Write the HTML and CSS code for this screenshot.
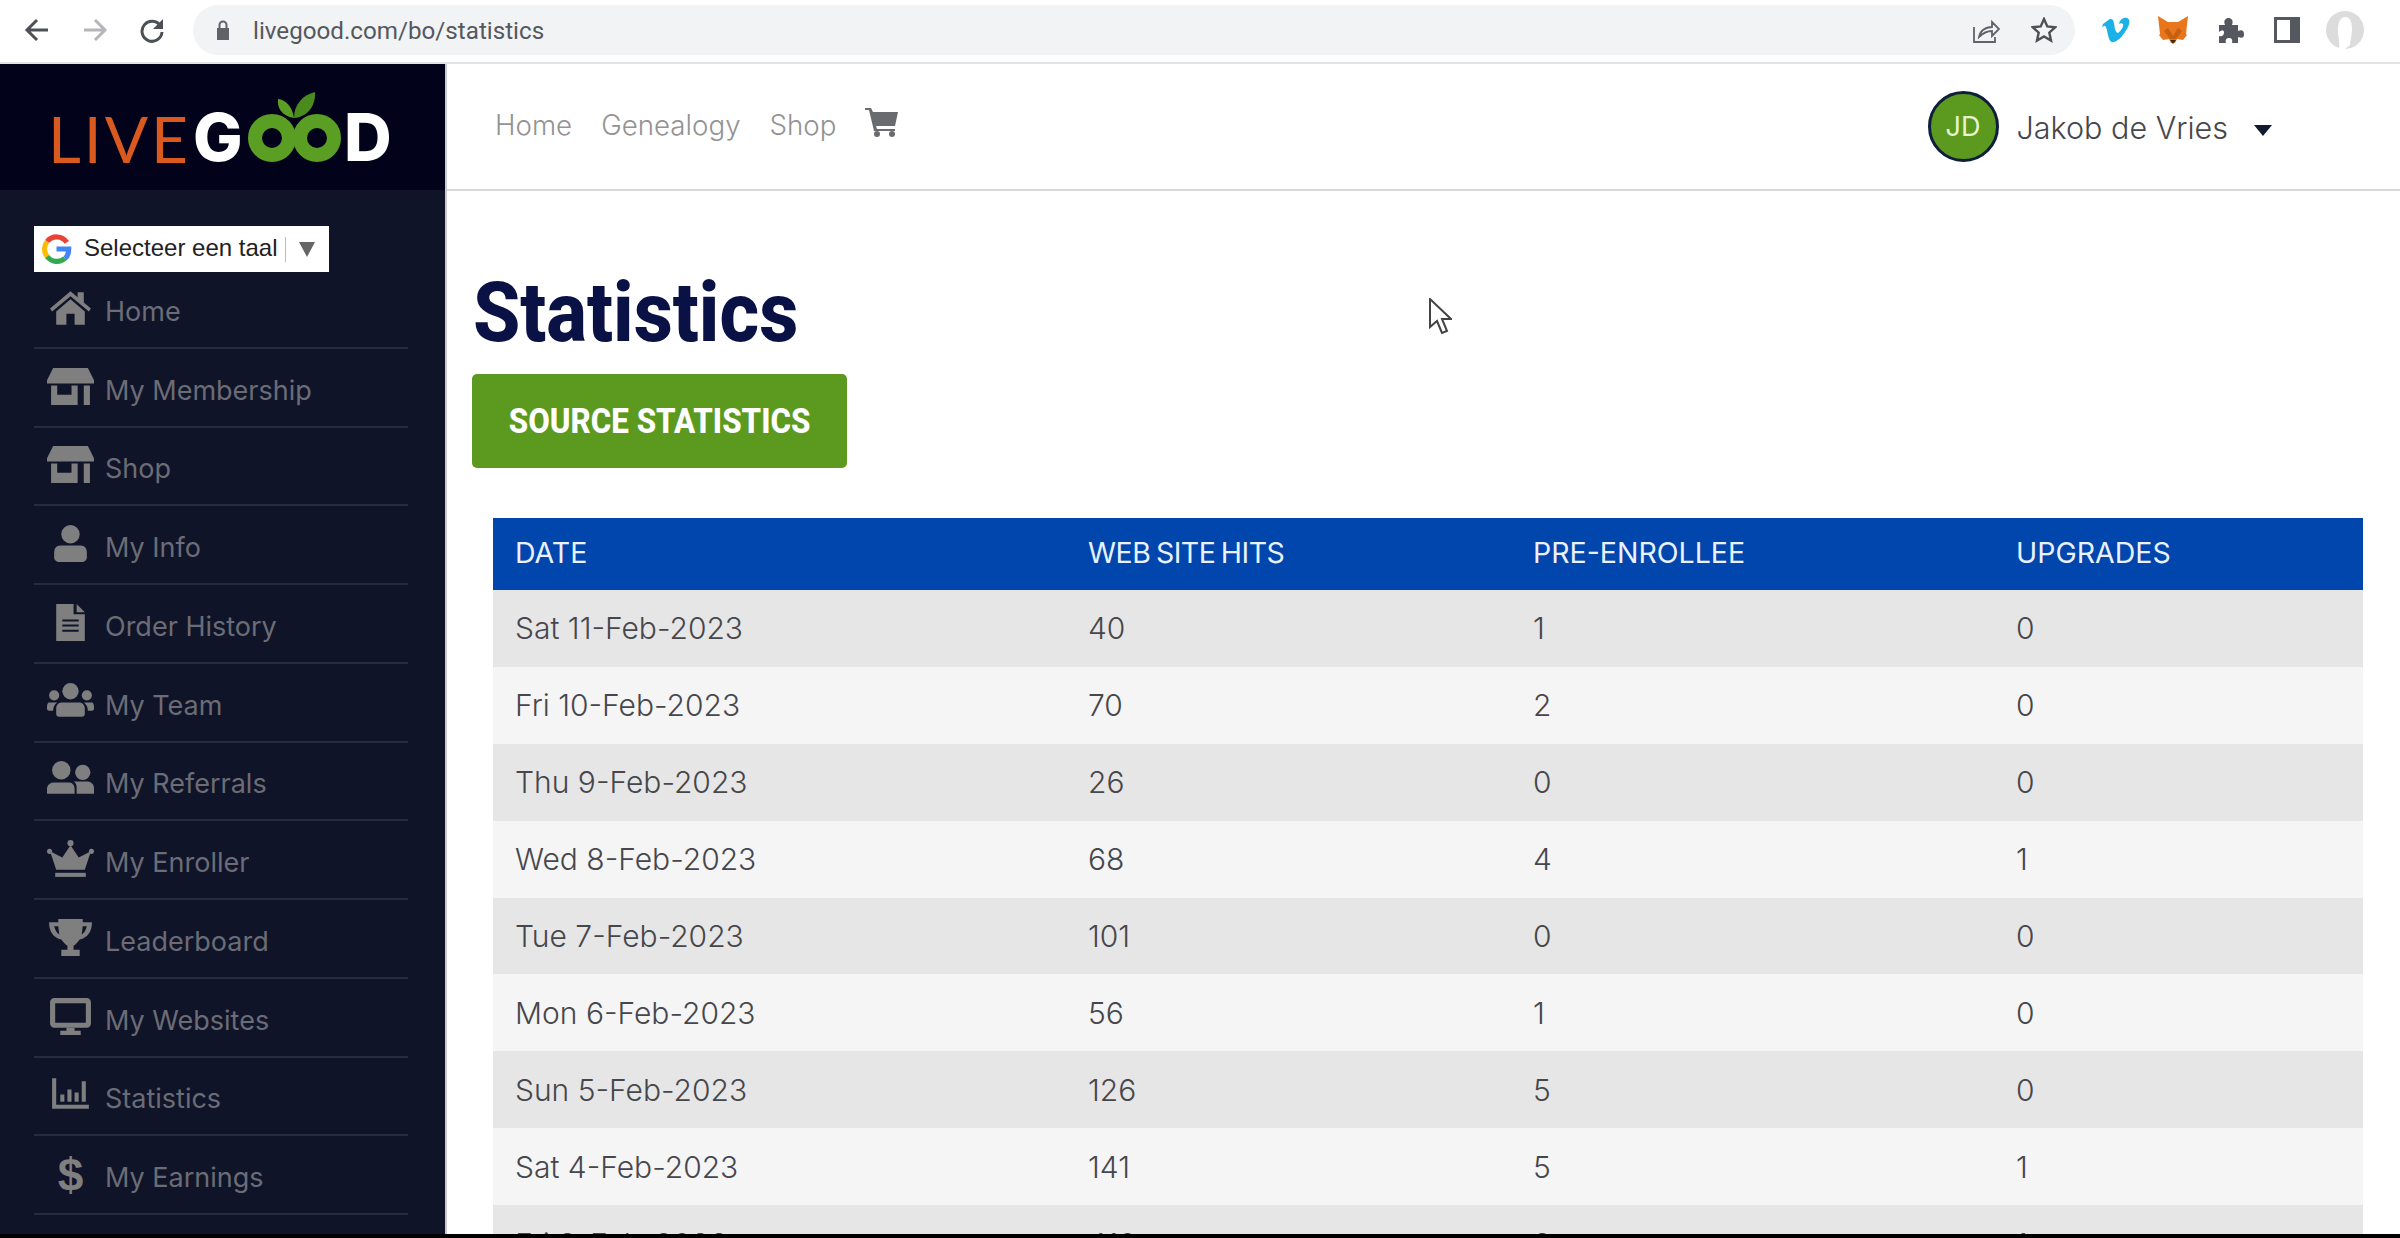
FILE: index.html
```html
<!DOCTYPE html>
<html lang="en">
<head>
  <meta charset="UTF-8" />
  <title>LiveGood - Statistics</title>
  <link rel="stylesheet" href="styles.css">
</head>
<body>

  <!-- Browser toolbar -->
  <div class="toolbar">
    <svg class="tb-nav" viewBox="0 0 26 26"><path d="M24 13H4M13 3 3 13l10 10" fill="none" stroke="#4d5156" stroke-width="3"/></svg>
    <svg class="tb-nav tb-forward" viewBox="0 0 26 26"><path d="M2 13h20M13 3l10 10-10 10" fill="none" stroke="#b4b6ba" stroke-width="3"/></svg>
    <svg class="tb-nav tb-reload" viewBox="0 0 26 26"><path d="M21.5 9A10 10 0 1 0 23 15" fill="none" stroke="#4d5156" stroke-width="3"/><path d="M24 2v10H14z" fill="#4d5156"/></svg>
    <div class="omnibox">
      <svg class="lock" viewBox="0 0 16 20"><path d="M2 8h12v12H2z" fill="#5f6368"/><path d="M4.500 8V5a3.500 3.500 0 0 1 7 0v3" fill="none" stroke="#5f6368" stroke-width="2"/></svg>
      <span class="url">livegood.com/bo/statistics</span>
      <svg class="share" viewBox="0 0 27 25"><path d="M1 9v15h21v-5M6 19c1-6 6-10 13-10V4l7 7-7 7v-5c-5 0-9 2-13 6z" fill="none" stroke="#5f6368" stroke-width="1.800"/></svg>
      <svg class="star" viewBox="0 0 26 26"><path d="m13 2 3.300 7.400 8 .8-6 5.400 1.700 7.900-7-4.100-7 4.100 1.700-7.900-6-5.400 8-.8z" fill="none" stroke="#4d5156" stroke-width="2.400"/></svg>
    </div>
    <div class="extensions">
      <svg class="ext-vimeo" viewBox="0 0 30 28"><path d="M2 8c4-3 6-5 8-5 3 0 3 5 4 10 1 3 2 4 3 4 3-2 6-7 5-9-1-1-3-1-4 0 1-5 5-7 8-6 3 1 3 5 1 9-3 6-9 14-14 15-4 1-5-3-6-7-1-5-2-10-4-9l-2 1z" fill="#1ab0e8"/></svg>
      <svg class="ext-fox" viewBox="0 0 30 28"><path d="M0 0l10 6h10l10-6-2 18 1 1-4 5-6-1-2 4h-4l-2-4-6 1-4-5 1-1z" fill="#e8761c"/><path d="M10 12l5 8 5-8 4 3-6 8h-6l-6-8z" fill="#c75f12"/><path d="M12 24h6l-3 4z" fill="#3a2a20"/></svg>
      <svg class="ext-puzzle" viewBox="0 0 27 27"><path d="M2 8h6c-2-5 1-7 3.500-7S17 3 15 8h6v6c5-2 6 1 6 3.500S26 22 21 20v6h-6c1-4-1-5-3-5s-4 1-3 5H2v-7c3 1 5-1 5-3.500S5 13 2 15z" fill="#55585e"/></svg>
      <svg class="ext-panel" viewBox="0 0 26 26"><path d="M0 0h26v26H0z" fill="#55585e"/><path d="M3 3h13v20H3z" fill="#fff"/></svg>
      <svg class="ext-profile" viewBox="0 0 38 38"><circle cx="19" cy="19" r="19" fill="#dcdcdc"/><path d="M13 38c1-8-1-12-1-20 0-9 4-12 7-12 4 0 7 3 7 12 0 7-2 12-2 16l-5 4z" fill="#fff"/></svg>
    </div>
  </div>

  <div class="app">

    <!-- Sidebar -->
    <aside class="sidebar">
      <div class="brand">
        <div class="logo">
          <span class="logo-live">LIVE</span>
          <span class="logo-good">G</span>
          <svg class="logo-mark" viewBox="0 0 93 70">
            <circle cx="24" cy="46" r="17" fill="none" stroke="#5a9e24" stroke-width="14"/>
            <circle cx="69" cy="46" r="17" fill="none" stroke="#5a9e24" stroke-width="14"/>
            <path d="M46 26C33 24 29 15 30 7c8 1 14 7 16 19z" fill="#5a9e24"/>
            <path d="M46 26C46 12 55 3 67 0c1 13-7 25-21 26z" fill="#4b8a1c"/>
          </svg>
          <span class="logo-good">D</span>
        </div>
      </div>

      <div class="translate">
        <svg class="g-logo" viewBox="0 0 32 32">
          <path d="M27 9A13 13 0 0 0 6 8" fill="none" stroke="#ea4335" stroke-width="5.500"/>
          <path d="M6 8a13 13 0 0 0 0 16" fill="none" stroke="#fbbc05" stroke-width="5.500"/>
          <path d="M6 24a13 13 0 0 0 19 2" fill="none" stroke="#34a853" stroke-width="5.500"/>
          <path d="M25 26c3-2 4-6 4-10H16" fill="none" stroke="#4285f4" stroke-width="5.500"/>
        </svg>
        <span class="translate-label">Selecteer een taal</span>
        <span class="translate-sep"></span>
        <span class="translate-arrow"></span>
      </div>

      <ul class="nav">
        <li class="nav-item">
          <svg class="nav-icon" viewBox="0 0 46 36"><path d="M23 2 3 19l2 3L23 7l18 15 2-3-7-6V3h-6v5z"/><path d="M23 10 9 22v13h10V24h8v11h10V22z"/></svg>
          <span>Home</span>
        </li>
        <li class="nav-item">
          <svg class="nav-icon" viewBox="0 0 46 36"><path d="M6 0h34l6 12v3H0v-3z"/><path d="M4 17h6v9h14v-9h6v19H4zM36 17h6v19h-6z"/></svg>
          <span>My Membership</span>
        </li>
        <li class="nav-item">
          <svg class="nav-icon" viewBox="0 0 46 36"><path d="M6 0h34l6 12v3H0v-3z"/><path d="M4 17h6v9h14v-9h6v19H4zM36 17h6v19h-6z"/></svg>
          <span>Shop</span>
        </li>
        <li class="nav-item">
          <svg class="nav-icon" viewBox="0 0 46 36"><circle cx="23" cy="9" r="9"/><path d="M13 20h20c4 0 6 3 6 7v5c0 2-2 4-4 4H11c-2 0-4-2-4-4v-5c0-4 2-7 6-7z"/></svg>
          <span>My Info</span>
        </li>
        <li class="nav-item">
          <svg class="nav-icon" viewBox="0 0 46 36"><path d="M9 0h17v10h11v26H9zM29 0l8 8h-8z"/><path d="M15 15h16v2H15zM15 20h16v2H15zM15 25h16v2H15z" fill="#0f1429"/></svg>
          <span>Order History</span>
        </li>
        <li class="nav-item">
          <svg class="nav-icon" viewBox="0 0 46 36"><circle cx="23" cy="8" r="8"/><circle cx="7" cy="12" r="5"/><circle cx="39" cy="12" r="5"/><path d="M14 19h18c3 0 5 3 5 6v5c0 2-1 3-3 3H12c-2 0-3-1-3-3v-5c0-3 2-6 5-6zM2 19h8c-3 2-4 5-4 8H2c-1 0-2-1-2-2v-2c0-2 1-4 2-4zM36 19h8c1 0 2 2 2 4v2c0 1-1 2-2 2h-4c0-3-1-6-4-8z"/></svg>
          <span>My Team</span>
        </li>
        <li class="nav-item">
          <svg class="nav-icon" viewBox="0 0 46 36"><circle cx="14" cy="9" r="9"/><circle cx="35" cy="11" r="7.500"/><path d="M6 21h16c3 0 5 3 5 6v5H0v-5c0-3 3-6 6-6zM29 32v-6c0-3-1-5-3-6h14c3 0 6 3 6 6v6z"/></svg>
          <span>My Referrals</span>
        </li>
        <li class="nav-item">
          <svg class="nav-icon" viewBox="0 0 46 36"><circle cx="23" cy="3" r="3"/><circle cx="2.500" cy="11" r="2.500"/><circle cx="43.500" cy="11" r="2.500"/><path d="M23 5l8 12 12-6-6 18H9L3 11l12 6z"/><path d="M8 32h30v4H8z"/></svg>
          <span>My Enroller</span>
        </li>
        <li class="nav-item">
          <svg class="nav-icon" viewBox="0 0 46 36"><path d="M11 0h24v3h9c0 9-4 15-12 17-2 3-4 5-6 6v4h6v6H14v-6h6v-4c-2-1-4-3-6-6C6 18 2 12 2 3h9zm0 7H7c1 4 3 7 5 8zm24 0-1 8c2-1 4-4 5-8z"/></svg>
          <span>Leaderboard</span>
        </li>
        <li class="nav-item">
          <svg class="nav-icon" viewBox="0 0 46 36"><path d="M7 0h32c2 0 4 2 4 4v21c0 2-2 4-4 4H7c-2 0-4-2-4-4V4c0-2 2-4 4-4zm1 5v19h30V5z"/><path d="M19 29h8v3h6v4H13v-4h6z"/></svg>
          <span>My Websites</span>
        </li>
        <li class="nav-item">
          <svg class="nav-icon" viewBox="0 0 46 36"><path d="M5 2h4v26h32v4H5z"/><path d="M13 18h4v7h-4zM20 13h4v12h-4zM27 16h4v9h-4zM34 5h4v20h-4z"/></svg>
          <span>Statistics</span>
        </li>
        <li class="nav-item">
          <span class="nav-glyph">$</span>
          <span>My Earnings</span>
        </li>
        <li class="nav-item">
          <svg class="nav-icon" viewBox="0 0 46 36"><path d="M11 0h24v3H11z"/></svg>
        </li>
      </ul>
    </aside>

    <!-- Main content -->
    <main class="main">
      <header class="topbar">
        <nav class="topnav">
          <a>Home</a>
          <a>Genealogy</a>
          <a>Shop</a>
          <svg class="cart" viewBox="0 0 33 29"><path d="M0 0h6l2 4h25l-3 14H11l1 3h18v2H9L4 2H0z" fill="#6a6b6e"/><circle cx="12" cy="26" r="3" fill="#6a6b6e"/><circle cx="27" cy="26" r="3" fill="#6a6b6e"/></svg>
        </nav>
        <div class="user">
          <div class="avatar">JD</div>
          <span class="user-name">Jakob de Vries</span>
          <span class="user-caret"></span>
        </div>
      </header>

      <div class="content">
        <h1 class="page-title">Statistics</h1>
        <a class="btn-source"><span>SOURCE STATISTICS</span></a>

        <table class="stats">
          <colgroup>
            <col class="col-date"><col class="col-hits"><col class="col-pre"><col>
          </colgroup>
          <thead>
            <tr><th>DATE</th><th>WEB SITE HITS</th><th>PRE-ENROLLEE</th><th>UPGRADES</th></tr>
          </thead>
          <tbody>
            <tr><td>Sat 11-Feb-2023</td><td>40</td><td>1</td><td>0</td></tr>
            <tr><td>Fri 10-Feb-2023</td><td>70</td><td>2</td><td>0</td></tr>
            <tr><td>Thu 9-Feb-2023</td><td>26</td><td>0</td><td>0</td></tr>
            <tr><td>Wed 8-Feb-2023</td><td>68</td><td>4</td><td>1</td></tr>
            <tr><td>Tue 7-Feb-2023</td><td>101</td><td>0</td><td>0</td></tr>
            <tr><td>Mon 6-Feb-2023</td><td>56</td><td>1</td><td>0</td></tr>
            <tr><td>Sun 5-Feb-2023</td><td>126</td><td>5</td><td>0</td></tr>
            <tr><td>Sat 4-Feb-2023</td><td>141</td><td>5</td><td>1</td></tr>
            <tr><td>Fri 3-Feb-2023</td><td>410</td><td>3</td><td>1</td></tr>
          </tbody>
        </table>
      </div>

      <!-- Mouse pointer from the recording -->
      <svg class="pointer" viewBox="0 0 24 38"><path d="M2 1v28l7-6 5 12 5-2-5-12h9z" fill="#fff" stroke="#444" stroke-width="2"/></svg>
    </main>
  </div>

</body>
</html>
```

FILE: styles.css
```css
* { box-sizing: border-box; }
html, body { height: 100%; margin: 0; overflow: hidden; }
body {
  background: #000;
  font-family: "Inter", "Liberation Sans", sans-serif;
}

/* Browser toolbar */
.toolbar {
  height: 64px;
  background: #fff;
  border-bottom: 2px solid #e2e3e5;
  display: flex;
  align-items: center;
  padding: 0 0 2px 24px;
}
.tb-nav { width: 26px; height: 26px; flex: none; }
.tb-forward { margin-left: 32px; }
.tb-reload { margin-left: 31px; }
.omnibox {
  width: 1882px;
  height: 50px;
  margin-left: 28px;
  border-radius: 25px;
  background: #f1f3f4;
  display: flex;
  align-items: center;
  padding-left: 22px;
}
.lock { width: 16px; height: 20px; }
.url {
  margin-left: 22px;
  padding-top: 2px;
  font: 24.200px "Roboto", sans-serif;
  color: #55585e;
  flex: 1;
}
.share { width: 27px; height: 25px; }
.star { width: 26px; height: 26px; margin-left: 31px; margin-right: 18px; }
.extensions { display: flex; align-items: center; margin-left: 26px; }
.ext-vimeo { width: 30px; height: 28px; }
.ext-fox { width: 30px; height: 28px; margin-left: 27px; }
.ext-puzzle { width: 27px; height: 27px; margin-left: 29px; }
.ext-panel { width: 26px; height: 26px; margin-left: 30px; }
.ext-profile { width: 38px; height: 38px; margin-left: 26px; }

/* Page */
.app {
  height: 1170px;
  display: flex;
  background: #fff;
  overflow: hidden;
}

.sidebar {
  width: 447px;
  flex: none;
  background: #0f1429;
  border-right: 2px solid #c9cbd0;
}
.brand {
  height: 126px;
  background: #02031a;
  padding: 28px 0 0 48px;
}
.logo { display: flex; align-items: flex-end; height: 70px; }
.logo-live {
  font: 400 64px/47px "Lato", sans-serif;
  color: #d9591f;
  width: 145px;
  height: 47px;
  letter-spacing: 3px;
}
.logo-good {
  font: 800 66px/47px "Inter", sans-serif;
  color: #fff;
  height: 48px;
  width: 55px;
}
.logo-mark { width: 93px; height: 70px; flex: none; }
.logo-mark + .logo-good { margin-left: 3px; }

.translate {
  width: 295px;
  height: 46px;
  margin: 36px 0 0 34px;
  background: #fff;
  display: flex;
  align-items: center;
  padding-left: 7px;
}
.g-logo { width: 31px; height: 30px; flex: none; }
.translate-label {
  margin-left: 12px;
  padding-bottom: 2px;
  font: 24px "Liberation Sans", sans-serif;
  color: #222;
  width: 196px;
  white-space: nowrap;
}
.translate-sep { width: 1px; height: 25px; background: #bbb; margin-left: 5px; }
.translate-arrow {
  margin-left: 13px;
  border-left: 8.500px solid transparent;
  border-right: 8.500px solid transparent;
  border-top: 15px solid #666;
}

.nav {
  list-style: none;
  margin: -2px 0 0 34px;
  padding: 0;
  width: 374px;
}
.nav-item {
  height: 78.750px;
  border-bottom: 2px solid #252b43;
  display: flex;
  align-items: center;
  padding-left: 13px;
  font-size: 27px;
  font-weight: 400;
  color: #6b6c75;
}
.nav-item span:last-child { padding-top: 6px; margin-left: 11px; }
.nav-icon { width: 47px; height: 37px; flex: none; fill: #7f7f80; margin-top: -2px; }
.nav-item .nav-glyph {
  width: 47px;
  flex: none;
  text-align: center;
  font: 700 46px "Liberation Sans", sans-serif;
  color: #7f7f80;
}

.main { flex: 1; min-width: 0; position: relative; }

.topbar {
  height: 127px;
  border-bottom: 2px solid #d6d8dc;
  display: flex;
  align-items: center;
  justify-content: space-between;
  padding: 0 128px 0 48px;
}
.topnav {
  display: flex;
  align-items: center;
  gap: 29px;
  font-size: 27.700px;
  font-weight: 300;
  color: #939393;
  margin-top: -4px;
}
.cart { width: 33px; height: 29px; margin-top: -4px; }
.user { display: flex; align-items: center; }
.avatar {
  width: 71px;
  height: 71px;
  border-radius: 50%;
  background: #5c9a1f;
  border: 3px solid #0f1e3c;
  display: flex;
  align-items: center;
  justify-content: center;
  color: #e6f5d0;
  font-size: 27px;
}
.user-name {
  margin-left: 18px;
  padding-top: 2px;
  font-size: 30.500px;
  font-weight: 300;
  color: #46474c;
}
.user-caret {
  margin-left: 26px;
  margin-top: 8px;
  border-left: 9px solid transparent;
  border-right: 9px solid transparent;
  border-top: 11px solid #141a2e;
}

.content { padding: 74px 37px 0 25px; }
.page-title {
  margin: 0 0 0 1px;
  font: 800 84px/96px "Roboto", sans-serif;
  color: #0a1145;
  transform: scaleX(.908);
  transform-origin: left center;
}
.btn-source {
  display: flex;
  align-items: center;
  justify-content: center;
  width: 375px;
  height: 94px;
  margin-top: 13px;
  border-radius: 5px;
  background: #5c9a1f;
  color: #fff;
  font: 800 35px "Roboto", sans-serif;
}
.btn-source span { transform: scaleX(.895); white-space: nowrap; }

.stats {
  width: 1870px;
  margin: 50px 0 0 21px;
  border-collapse: collapse;
  table-layout: fixed;
  font-size: 30px;
}
.col-date { width: 573px; }
.col-hits { width: 445px; }
.col-pre { width: 483px; }
.stats th {
  height: 72px;
  padding: 0 0 3px 22px;
  background: #0046ad;
  color: #eaf1ff;
  font-size: 28.500px;
  font-weight: 400;
  text-align: left;
}
.stats th:nth-child(2) { letter-spacing: -.5px; word-spacing: -2px; }
.stats td {
  height: 76.900px;
  padding: 0 0 0 22px;
  color: #46474c;
  font-weight: 300;
}
.stats tbody tr:nth-child(odd) { background: #e6e6e6; }
.stats tbody tr:nth-child(even) { background: #f5f5f5; }

.pointer {
  position: absolute;
  left: 981px;
  top: 234px;
  width: 24px;
  height: 38px;
}
```
